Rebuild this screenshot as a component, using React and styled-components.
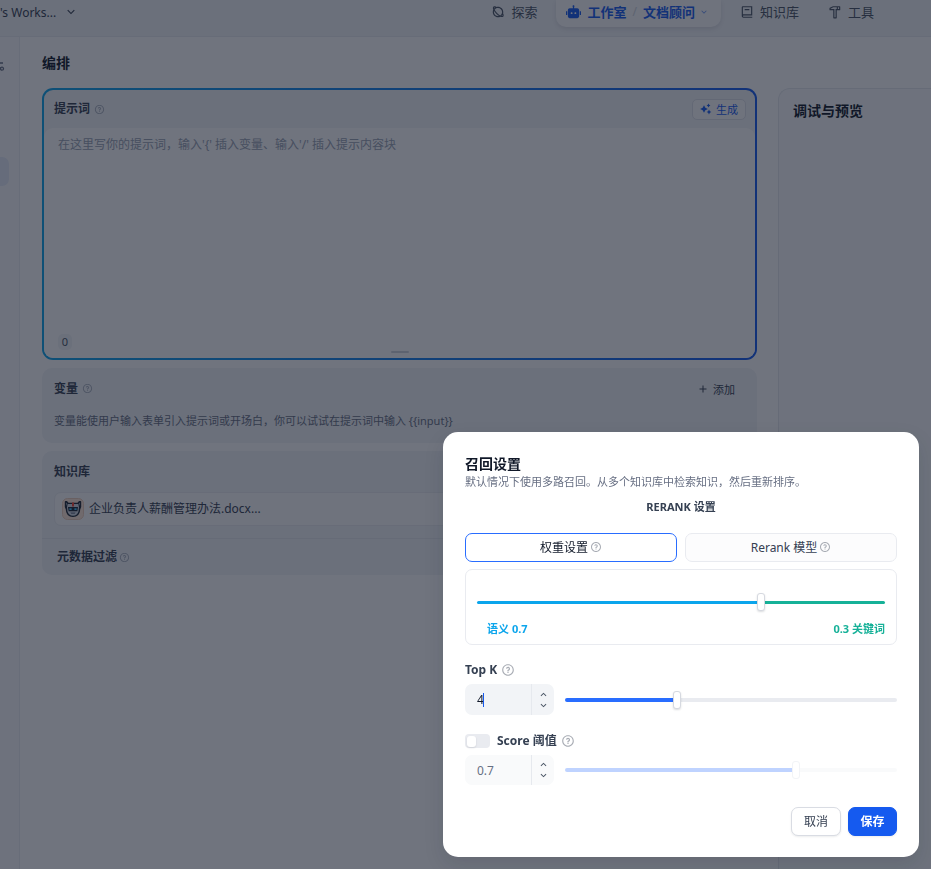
import React from 'react'
import { useState } from 'react'
import styled, { createGlobalStyle } from 'styled-components'
import { RiRobot2Fill, RiArrowDownSLine, RiArrowUpSLine, RiQuestionLine, RiSparkling2Fill, RiAddLine, RiPlanetLine, RiBook2Line, RiHammerLine } from 'react-icons/ri'

const GlobalStyle = createGlobalStyle`
* { box-sizing: border-box; }
body {
    margin: 0;
    background: #fff;
    color: #354052;
    font-family: "Noto Sans", "Noto Sans CJK SC", sans-serif;
    font-size: 12px;
    line-height: 16px;
}
button, input { font-family: inherit; }
h1, h2, p { margin: 0; }
`

const Page = styled.div`
    min-height: 100vh;
    display: flex;
    flex-direction: column;
`

const TopBar = styled.header`
    height: 37px;
    display: flex;
    align-items: flex-start;
    justify-content: space-between;
    padding-right: 51px;
    background: #f2f4f7;
    border-bottom: 1px solid #e9ebf0;
`

const Workspace = styled.button`
    display: flex;
    align-items: center;
    gap: 8px;
    height: 24px;
    padding: 0;
    border: 0;
    background: none;
    color: #354052;
    font-size: 12px;
`

const Nav = styled.nav`
    display: flex;
    height: 27px;
`

const NavLink = styled.a`
    display: flex;
    align-items: center;
    gap: 6px;
    height: 24px;
    padding: 0 6px;
    color: ${props => props.$active ? '#155aef' : '#495464'};
    font-size: 13px;
    font-weight: ${props => props.$active ? 700 : 400};
    text-decoration: none;
`

const AppLink = styled(NavLink)`
    gap: 4px;
    svg { opacity: .6; }
`

const NavItem = styled.div`
    padding: 0 ${props => props.$wide ? '17px' : '13px'} 0 13px;
`

const NavPill = styled.div`
    display: flex;
    padding: 0 6px 0 4px;
    border-radius: 0 0 10px 10px;
    background: #fcfcfd;
    box-shadow: 0 2px 4px rgba(16, 24, 40, .1);
`

const Slash = styled.span`
    height: 24px;
    line-height: 24px;
    color: #d0d5dc;
`

const Body = styled.div`
    flex: 1;
    display: flex;
`

const SideBar = styled.aside`
    width: 20px;
    padding-top: 23px;
    border-right: 1px solid #eceef2;
    background: #fafbfc;
`

const SideActive = styled.div`
    width: 9px;
    height: 29px;
    margin-top: 81px;
    border-radius: 0 7px 7px 0;
    background: #e5eaf8;
`

const Main = styled.main`
    flex: 1;
    padding: 16px 21px 0 22px;
`

const Title = styled.h1`
    color: #101828;
    font-size: 14px;
    line-height: 20px;
`

const PromptBox = styled.section`
    height: 272px;
    margin: 15px 0 8px;
    padding: 2px;
    border-radius: 11px;
    background: linear-gradient(90deg, #0ba5ec, #155aef);
`

const PromptInner = styled.div`
    height: 100%;
    display: flex;
    flex-direction: column;
    border-radius: 9px;
    background: #f2f4f7;
`

const Head = styled.div`
    display: flex;
    align-items: center;
    justify-content: space-between;
    padding: ${props => props.$prompt ? '0 9px 0 10px' : '0 14px 0 12px'};
    height: ${props => props.$prompt ? '38px' : '41px'};
`

const Label = styled.span`
    display: flex;
    align-items: center;
    gap: ${props => props.$tight ? '2px' : '4px'};
    color: #354052;
    font-size: 12px;
    font-weight: ${props => props.$plain ? 400 : 700};
    svg { color: #a9b1be; }
`

const GenerateButton = styled.button`
    display: flex;
    align-items: center;
    gap: 4px;
    height: 21px;
    padding: 0 7px;
    border: 1px solid #dfe2e8;
    border-radius: 5px;
    background: #fcfcfd;
    color: #155aef;
    font-size: 11px;
`

const AddButton = styled(GenerateButton)`
    border-color: transparent;
    background: none;
    color: #354052;
`

const Editor = styled.div`
    flex: 1;
    display: flex;
    flex-direction: column;
    justify-content: space-between;
    padding: 9px 14px 0;
    border-radius: 9px;
    background: #fff;
    color: #98a2b2;
`

const EditorFoot = styled.div`
    display: grid;
    grid-template-columns: 1fr 18px 1fr;
    align-items: end;
    height: 30px;
    padding-bottom: 5px;
`

const Count = styled.span`
    width: 14px;
    margin-bottom: 3px;
    border-radius: 5px;
    background: #f2f4f7;
    color: #495464;
    font-size: 11px;
    text-align: center;
`

const Grip = styled.span`
    height: 2px;
    border-radius: 1px;
    background: #d0d5dc;
`

const Card = styled.section`
    margin-bottom: 8px;
    border-radius: 10px;
    background: #f2f4f7;
`

const CardText = styled.p`
    padding: 4px 12px 14px;
    color: #676f83;
    font-size: 11px;
`

const FileRow = styled.div`
    display: flex;
    align-items: center;
    gap: 5px;
    height: 34px;
    margin: 0 12px 12px;
    padding: 0 7px;
    border: 1px solid #eaecf0;
    border-radius: 7px;
    background: #fcfcfd;
`

const MetaRow = styled.div`
    height: 37px;
    display: flex;
    align-items: center;
    padding: 0 15px;
    border-top: 1px solid #e6e9ee;
`

const Debug = styled.section`
    flex: 0 0 153px;
    margin-top: 51px;
    padding: 12px 14px;
    border: 1px solid #e6e9ee;
    border-width: 1px 0 0 1px;
    border-radius: 12px 0 0 0;
    background: #fafbfc;
`

const Overlay = styled.div`
    position: fixed;
    inset: 0;
    display: flex;
    align-items: flex-end;
    justify-content: flex-end;
    padding: 12px;
    background: rgba(16, 24, 40, .6);
`

const Dialog = styled.form`
    width: 476px;
    max-width: 100%;
    padding: 22px 22px 21px;
    border-radius: 15px;
    background: #fff;
    box-shadow: 0 8px 20px rgba(16, 24, 40, .12);
`

const Intro = styled.p`
    color: #676f83;
    font-size: 11px;
`

const RerankTitle = styled.h2`
    margin: 9px 0 18px;
    color: #354052;
    font-size: 11px;
    line-height: 16px;
    text-align: center;
`

const Choices = styled.div`
    display: grid;
    grid-template-columns: 1fr 1fr;
    gap: 8px;
`

const Choice = styled.button`
    display: flex;
    align-items: center;
    justify-content: center;
    height: 29px;
    gap: 2px;
    padding: 0 6px 2px;
    border: 1px solid ${props => props.$on ? '#296dff' : '#e9ebf0'};
    border-radius: 7px;
    background: ${props => props.$on ? '#fff' : '#fcfcfd'};
    color: ${props => props.$on ? '#101828' : '#354052'};
    font-size: 12px;
    svg { color: #a9adb5; }
`

const WeightBox = styled.div`
    height: 76px;
    margin: 7px 0 16px;
    padding: 23px 11px 0;
    border: 1px solid #e9ebf0;
    border-radius: 7px;
`

const WeightLabels = styled.div`
    display: flex;
    justify-content: space-between;
    margin-top: 10px;
    padding-left: 10px;
    font-size: 11px;
    font-weight: 700;
    color: #0ba5ec;
    span + span { color: #16b198; }
`

const Range = styled.input`
    appearance: none;
    display: block;
    flex: 1;
    width: 100%;
    min-width: 0;
    height: 18px;
    margin: 0;
    background: none;
    &::-webkit-slider-runnable-track {
        height: ${props => props.$thick}px;
        border-radius: 2px;
        background: linear-gradient(90deg, ${props => props.$from} ${props => props.$fill}, ${props => props.$to} ${props => props.$fill});
    }
    &::-webkit-slider-thumb {
        appearance: none;
        width: 8px;
        height: 18px;
        margin-top: ${props => props.$thick === 3 ? '-8px' : '-7px'};
        border: 1px solid ${props => props.disabled ? '#f2f4f7' : '#d6d9e0'};
        border-radius: 3px;
        background: #fff;
        box-shadow: ${props => props.disabled ? 'none' : '0 1px 2px rgba(16, 24, 40, .15)'};
    }
`

const FieldHead = styled.div`
    display: flex;
    align-items: center;
    gap: 4px;
    height: 18px;
    margin-bottom: 5px;
    color: #354052;
    font-weight: 700;
    svg { color: #a9adb5; }
`

const FieldRow = styled.div`
    display: flex;
    align-items: center;
    gap: 11px;
    margin-bottom: ${props => props.$last ? '22px' : '17px'};
`

const NumberBox = styled.div`
    position: relative;
    display: flex;
    width: 89px;
    height: ${props => props.$off ? '30px' : '31px'};
    border-radius: 7px;
    background: ${props => props.$off ? '#f9fafb' : '#f2f4f7'};
`

const NumberInput = styled.input`
    width: 66px;
    padding: 0 0 0 12px;
    border: 0;
    outline: none;
    background: none;
    color: #101828;
    caret-color: transparent;
    font-size: 12px;
    &:disabled { color: #676f83; }
`

const Caret = styled.span`
    position: absolute;
    top: 9px;
    left: 18px;
    width: 1px;
    height: 14px;
    background: #155aef;
`

const Steps = styled.div`
    flex: 1;
    display: flex;
    flex-direction: column;
    justify-content: center;
    border-left: 1px solid #e6e9ee;
`

const Step = styled.button`
    display: flex;
    align-items: center;
    justify-content: center;
    height: 11px;
    padding: 0;
    border: 0;
    background: none;
    color: #495464;
`

const Switch = styled.input`
    appearance: none;
    display: flex;
    align-items: center;
    width: 25px;
    height: 14px;
    margin: 0 3px 0 0;
    padding: 2px;
    border-radius: 4px;
    background: #e9ebf0;
    &::before {
        content: '';
        width: 9px;
        height: 11px;
        border-radius: 3px;
        background: #fff;
        box-shadow: 0 1px 2px rgba(16, 24, 40, .12);
    }
`

const Actions = styled.div`
    display: flex;
    justify-content: flex-end;
    gap: 7px;
`

const ActionButton = styled.button`
    width: ${props => props.$primary ? '49px' : '50px'};
    height: 29px;
    padding: 0 0 2px;
    border: 1px solid ${props => props.$primary ? '#155aef' : '#d9dce3'};
    border-radius: 7px;
    background: ${props => props.$primary ? '#155aef' : '#fff'};
    box-shadow: 0 1px 2px rgba(16, 24, 40, .08);
    color: ${props => props.$primary ? '#fff' : '#354052'};
    font-size: 12px;
    font-weight: ${props => props.$primary ? 700 : 400};
`

function DogFace() {
    return (
        <svg width="22" height="22" viewBox="0 0 22 22">
            <rect x=".5" y=".5" width="21" height="21" rx="5" fill="#ffe6d5" stroke="#edcdb8" />
            <path d="M2.8 3.4C4.2 2.6 5.7 3.2 6.4 4.8H15.6C16.3 3.2 17.8 2.6 19.2 3.4V9L18.2 11.5C18 16 15.4 19 11 19S4 16 3.8 11.5L2.8 9Z" fill="#1d2735" />
            <path d="M5.6 6H16.4L17 9.2 16.6 13C16 16 14 17.8 11 17.8S6 16 5.4 13L5 9.2Z" fill="#d3d8e0" />
            <path d="M4 4.6 5.2 5.6 4.4 8ZM18 4.6 16.8 5.6 17.6 8Z" fill="#98a2b2" />
            <path d="M10 4.4h2v4.2h-2z" fill="#f4402b" />
            <path d="M6 9h10l-.6 4.2H6.6z" fill="#1d2735" />
            <path d="M7.4 10.2h2.2v1.8H7.4zM12.4 10.2h2.2v1.8h-2.2z" fill="#36bffa" />
            <path d="M8.4 14.4h5.2l-.8 1.4H9.2z" fill="#667085" />
        </svg>
    )
}

function Stepper({ id, off, value, onChange }) {
    return (
        <NumberBox $off={off}>
            <NumberInput id={id} value={value} disabled={off} autoFocus={!off} onChange={e => onChange(e.target.value)} />
            {!off && <Caret />}
            <Steps>
                <Step type="button" aria-label="增加" disabled={off}><RiArrowUpSLine size={11} /></Step>
                <Step type="button" aria-label="减少" disabled={off}><RiArrowDownSLine size={11} /></Step>
            </Steps>
        </NumberBox>
    )
}

function Background() {
    return (
        <Page>
            <TopBar>
                <Workspace>'s Works... <RiArrowDownSLine size={14} /></Workspace>
                <Nav>
                    <NavItem><NavLink href="#explore"><RiPlanetLine size={14} />探索</NavLink></NavItem>
                    <NavPill>
                        <NavLink href="#apps" $active><RiRobot2Fill size={15} />工作室</NavLink>
                        <Slash>/</Slash>
                        <AppLink href="#app" $active>文档顾问 <RiArrowDownSLine size={10} /></AppLink>
                    </NavPill>
                    <NavItem $wide><NavLink href="#datasets"><RiBook2Line size={14} />知识库</NavLink></NavItem>
                    <NavLink href="#tools"><RiHammerLine size={14} />工具</NavLink>
                </Nav>
            </TopBar>
            <Body>
                <SideBar>
                    <svg width="5" height="12" viewBox="0 0 5 12" fill="none" stroke="#676f83" strokeWidth="1.3">
                        <path d="M0 3H3M0 8H1" />
                        <circle cx="2" cy="8.7" r="1.5" />
                    </svg>
                    <SideActive />
                </SideBar>
                <Main>
                    <Title>编排</Title>
                    <PromptBox>
                        <PromptInner>
                            <Head $prompt>
                                <Label>提示词 <RiQuestionLine size={11} /></Label>
                                <GenerateButton><RiSparkling2Fill size={12} />生成</GenerateButton>
                            </Head>
                            <Editor>
                                <p>在这里写你的提示词，输入{"'{'"} 插入变量、输入'/' 插入提示内容块</p>
                                <EditorFoot><Count>0</Count><Grip /></EditorFoot>
                            </Editor>
                        </PromptInner>
                    </PromptBox>
                    <Card>
                        <Head>
                            <Label>变量 <RiQuestionLine size={11} /></Label>
                            <AddButton><RiAddLine size={12} />添加</AddButton>
                        </Head>
                        <CardText>变量能使用户输入表单引入提示词或开场白，你可以试试在提示词中输入 {'{{input}}'}</CardText>
                    </Card>
                    <Card>
                        <Head><Label>知识库</Label></Head>
                        <FileRow><DogFace /><Label $plain>企业负责人薪酬管理办法.docx...</Label></FileRow>
                        <MetaRow><Label $tight>元数据过滤 <RiQuestionLine size={11} /></Label></MetaRow>
                    </Card>
                </Main>
                <Debug><Title as="h2">调试与预览</Title></Debug>
            </Body>
        </Page>
    )
}

export default function App() {

    const [weight, setWeight] = useState(0.7)
    const [topK, setTopK] = useState('4')
    const [score, setScore] = useState('0.7')

    return (
        <>
            <GlobalStyle />
            <Background />
            <Overlay>
                <Dialog role="dialog" aria-labelledby="recall-title" onSubmit={e => e.preventDefault()}>
                    <Title id="recall-title">召回设置</Title>
                    <Intro>默认情况下使用多路召回。从多个知识库中检索知识，然后重新排序。</Intro>
                    <RerankTitle>RERANK 设置</RerankTitle>
                    <Choices>
                        <Choice type="button" $on>权重设置<RiQuestionLine size={12} /></Choice>
                        <Choice type="button">Rerank 模型<RiQuestionLine size={12} /></Choice>
                    </Choices>
                    <WeightBox>
                        <Range type="range" aria-label="语义权重" min="0" max="1" step="0.1" value={weight}
                            onChange={e => setWeight(Number(e.target.value))}
                            $thick={3} $from="#0ba5ec" $to="#16b198" $fill={weight * 100 + '%'} />
                        <WeightLabels>
                            <span>语义 {weight.toFixed(1)}</span>
                            <span>{(1 - weight).toFixed(1)} 关键词</span>
                        </WeightLabels>
                    </WeightBox>
                    <FieldHead><label htmlFor="topk">Top K</label><RiQuestionLine size={14} /></FieldHead>
                    <FieldRow>
                        <Stepper id="topk" value={topK} onChange={setTopK} />
                        <Range type="range" aria-label="Top K" min="1" max="10" value={topK}
                            onChange={e => setTopK(e.target.value)}
                            $thick={4} $from="#296dff" $to="#e9ebf0" $fill={(topK - 1) / 9 * 100 + '%'} />
                    </FieldRow>
                    <FieldHead>
                        <Switch type="checkbox" id="score-on" />
                        <label htmlFor="score-on">Score 阈值</label>
                        <RiQuestionLine size={14} />
                    </FieldHead>
                    <FieldRow $last>
                        <Stepper id="score" off value={score} onChange={setScore} />
                        <Range type="range" aria-label="Score 阈值" min="0" max="1" step="0.1" value={score} disabled readOnly
                            $thick={4} $from="#bfd3ff" $to="#f9fafb" $fill={score * 100 + '%'} />
                    </FieldRow>
                    <Actions>
                        <ActionButton type="button">取消</ActionButton>
                        <ActionButton $primary>保存</ActionButton>
                    </Actions>
                </Dialog>
            </Overlay>
        </>
    )
}
